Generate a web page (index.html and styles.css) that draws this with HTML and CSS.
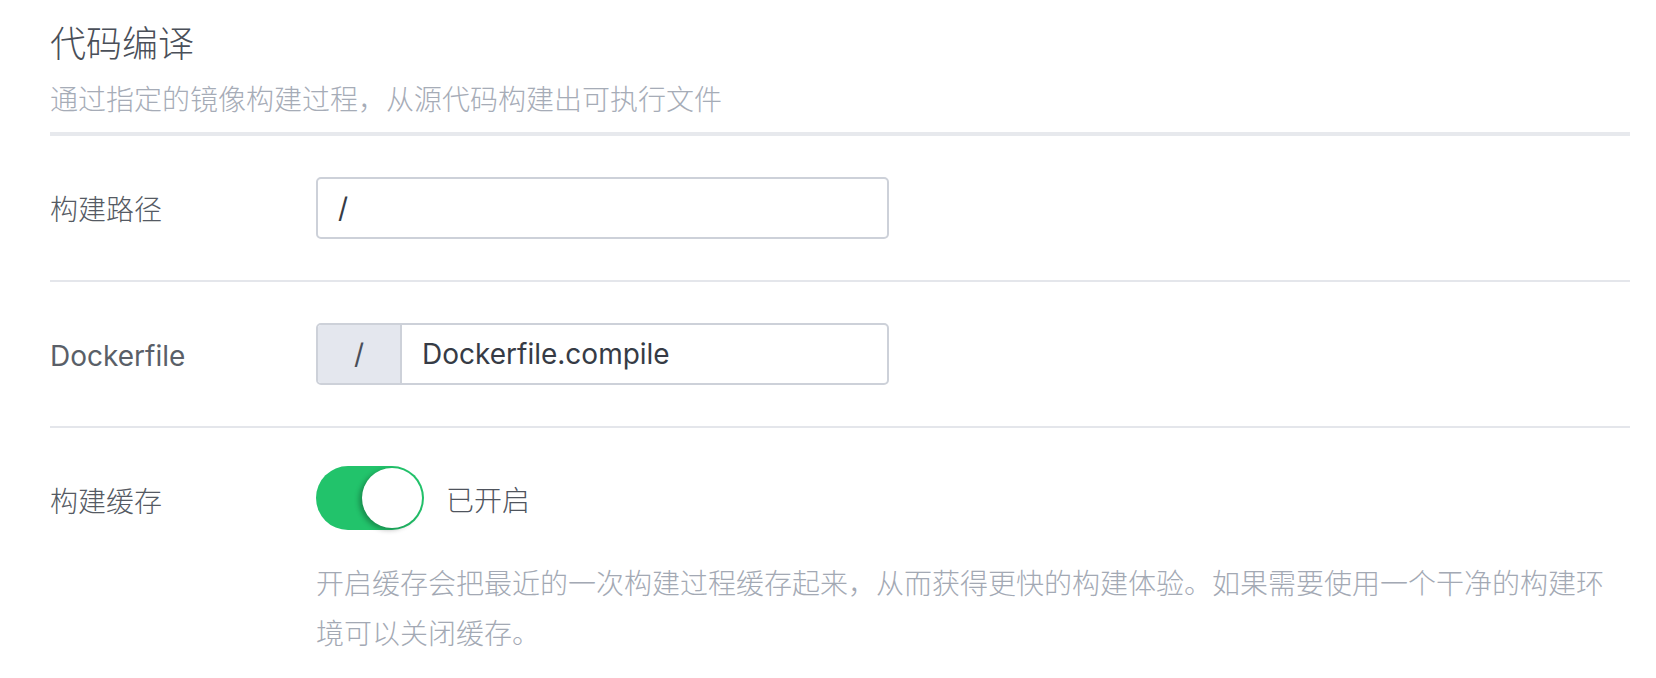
FILE: index.html
```html
<!DOCTYPE html>
<html lang="zh-CN">
<head>
<meta charset="utf-8">
<title>代码编译</title>
<link rel="stylesheet" href="styles.css">
</head>
<body>
<div class="page">
  <div class="header">
    <div class="title">代码编译</div>
    <div class="subtitle">通过指定的镜像构建过程，从源代码构建出可执行文件</div>
  </div>
  <div class="row">
    <div class="label">构建路径</div>
    <div class="control">
      <div class="input">/</div>
    </div>
  </div>
  <div class="row">
    <div class="label latin">Dockerfile</div>
    <div class="control">
      <div class="input-group">
        <div class="addon">/</div>
        <div class="group-input">Dockerfile.compile</div>
      </div>
    </div>
  </div>
  <div class="row row-toggle">
    <div class="label">构建缓存</div>
    <div class="control">
      <div class="switch-line">
        <div class="switch"><div class="knob"></div></div>
        <div class="switch-text">已开启</div>
      </div>
      <div class="desc">开启缓存会把最近的一次构建过程缓存起来，从而获得更快的构建体验。如果需要使用一个干净的构建环境可以关闭缓存。</div>
    </div>
  </div>
</div>
</body>
</html>
```

FILE: styles.css
```css
html, body {
  margin: 0;
  padding: 0;
  background: #ffffff;
}
body {
  font-family: Inter, "Noto Sans CJK SC", sans-serif;
  font-size: 28px;
  font-weight: 300;
  color: #555a63;
}
.page {
  padding: 0 26px 0 50px;
}
.header {
  padding-top: 19px;
  padding-bottom: 12px;
  border-bottom: 4px solid #e7e9ed;
}
.title {
  font-size: 36px;
  line-height: 50px;
  color: #4a4f59;
}
.subtitle {
  margin-top: 11px;
  font-size: 28px;
  line-height: 40px;
  color: #a6acb7;
}
.row {
  display: flex;
  align-items: center;
  padding: 41px 0;
  border-bottom: 2px solid #e4e6eb;
}
.label {
  width: 266px;
  flex: none;
  line-height: 40px;
  padding-top: 3px;
  color: #555a63;
}
.label.latin {
  font-weight: 400;
  color: #5a5f68;
}
.control {
  flex: 1;
  min-width: 0;
}
.input {
  box-sizing: border-box;
  width: 573px;
  height: 62px;
  border: 2px solid #cdd1d9;
  border-radius: 5px;
  padding: 0 20px;
  display: flex;
  align-items: center;
  color: #363b45;
  font-weight: 400;
}
.input-group {
  box-sizing: border-box;
  width: 573px;
  height: 62px;
  border: 2px solid #cdd1d9;
  border-radius: 5px;
  display: flex;
  overflow: hidden;
  font-weight: 400;
}
.addon {
  width: 82px;
  flex: none;
  background: #e4e7ee;
  border-right: 2px solid #cdd1d9;
  display: flex;
  align-items: center;
  justify-content: center;
  color: #4a4f59;
}
.group-input {
  flex: 1;
  padding: 0 20px;
  display: flex;
  align-items: center;
  color: #363b45;
}
.row-toggle {
  align-items: flex-start;
  padding: 38px 0 0 0;
  border-bottom: none;
}
.row-toggle .label {
  margin-top: 13px;
}
.switch-line {
  display: flex;
  align-items: center;
  gap: 22px;
}
.switch {
  position: relative;
  width: 108px;
  height: 64px;
  border-radius: 32px;
  background: #22c36b;
  flex: none;
}
.knob {
  position: absolute;
  right: 2px;
  top: 2px;
  width: 60px;
  height: 60px;
  border-radius: 50%;
  background: #ffffff;
  box-shadow: -3px 2px 5px rgba(0, 0, 0, 0.28);
}
.switch-text {
  line-height: 40px;
  padding-top: 6px;
  color: #4f545d;
}
.desc {
  margin-top: 29px;
  line-height: 50px;
  color: #a3a9b4;
}
```
